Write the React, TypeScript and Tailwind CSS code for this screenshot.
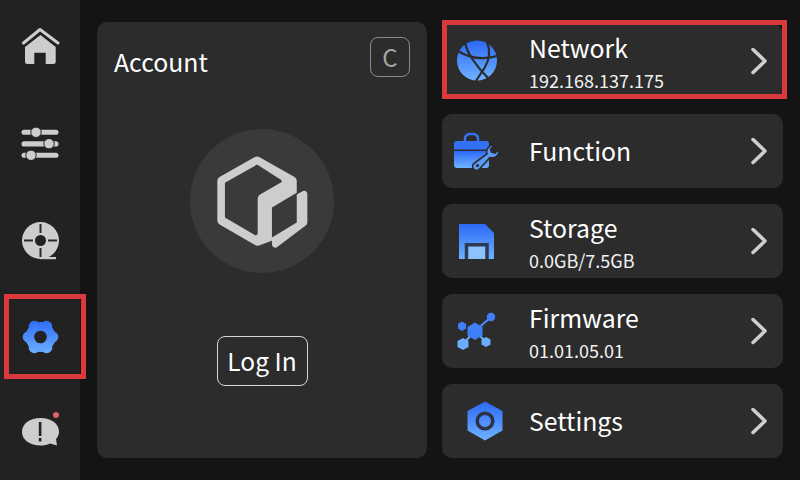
const FONT = "font-['Noto_Sans_CJK_SC','Noto_Sans',sans-serif]";

function Grad({ id }: { id: string }) {
  return (
    <defs>
      <linearGradient id={id} x1="0" y1="0" x2="0" y2="1">
        <stop offset="0" stopColor="#2b69f6" />
        <stop offset="1" stopColor="#6fb2ff" />
      </linearGradient>
    </defs>
  );
}

function Home() {
  return (
    <svg width="40" height="40" viewBox="0 0 40 40">
      <path d="M3.500 18 L20 4.500 L38 18" fill="none" stroke="#cdcdcd" strokeWidth="3" strokeLinecap="round" strokeLinejoin="round" />
      <path d="M20.500 10 L35.700 22 V36.500 a2.500 2.500 0 0 1 -2.500 2.500 H25.700 V27.700 H14.300 V39 H7.500 A2.500 2.500 0 0 1 5 36.500 V22 Z" fill="#cdcdcd" />
    </svg>
  );
}

function Sliders() {
  return (
    <svg width="40" height="40" viewBox="0 0 40 40" fill="#cdcdcd">
      <rect x="1.500" y="9.800" width="37" height="5" rx="2.500" />
      <circle cx="16" cy="12.300" r="5.200" stroke="#222" strokeWidth="1" />
      <rect x="1.500" y="21.200" width="37" height="5.400" rx="2.700" />
      <circle cx="29" cy="23.700" r="5.200" stroke="#222" strokeWidth="1" />
      <rect x="1.500" y="32.800" width="37" height="5" rx="2.500" />
      <circle cx="11" cy="35.300" r="5.200" stroke="#222" strokeWidth="1" />
    </svg>
  );
}

function Reel() {
  return (
    <svg width="40" height="40" viewBox="0 0 40 40">
      <circle cx="20.500" cy="20.500" r="18.500" fill="#cdcdcd" />
      <rect x="20" y="37" width="16" height="2.200" fill="#cdcdcd" />
      <circle cx="20.500" cy="20.500" r="5.500" fill="#222" />
      <rect x="19.500" y="4" width="2" height="9" fill="#2a2a2a" />
      <rect x="19.500" y="28" width="2" height="9" fill="#2a2a2a" />
      <rect x="4" y="19.500" width="9" height="2" fill="#2a2a2a" />
      <rect x="28" y="19.500" width="9" height="2" fill="#2a2a2a" />
    </svg>
  );
}

function Gear() {
  const lobes = [0, 60, 120, 180, 240, 300];
  return (
    <svg width="40" height="40" viewBox="0 0 40 40">
      <defs>
        <linearGradient id="g-gear" gradientUnits="userSpaceOnUse" x1="0" y1="2" x2="0" y2="38">
          <stop offset="0" stopColor="#2b69f6" />
          <stop offset="1" stopColor="#6fb2ff" />
        </linearGradient>
      </defs>
      <g fill="url(#g-gear)">
        <circle cx="20.500" cy="20" r="15" />
        {lobes.map((a) => (
          <circle
            key={a}
            cx={20.5 + 12 * Math.cos((a * Math.PI) / 180)}
            cy={20 + 12 * Math.sin((a * Math.PI) / 180)}
            r="5.800"
          />
        ))}
      </g>
      <circle cx="20.500" cy="20" r="6.300" fill="#222" />
    </svg>
  );
}

function Alert() {
  return (
    <svg width="40" height="40" viewBox="0 0 40 40">
      <path d="M20.500 6 C31 6 39 11.500 39 19.500 c0 3 -1.200 5.500 -3 7.500 L37 33.500 L30 31.500 C27 33 24 33.500 20.500 33.500 C10 33.500 2 28 2 20 C2 11.500 10 6 20.500 6 Z" fill="#cdcdcd" />
      <rect x="18.800" y="10" width="2.600" height="14" fill="#222" />
      <rect x="18.800" y="26" width="2.600" height="3.500" fill="#222" />
    </svg>
  );
}

function Globe() {
  return (
    <svg width="42" height="42" viewBox="0 0 42 42">
      <Grad id="g-globe" />
      <circle cx="21" cy="20.500" r="20" fill="url(#g-globe)" />
      <g fill="none" stroke="#2c2c2c" strokeWidth="2.200">
        <path d="M9 2 C10 9 13 14 17 20 C21 26 26 32 32 38" />
        <path d="M2 11 C10 16 24 21 41 16" />
        <path d="M31 2 C35 12 33 20 29 27 C26 32 23 36 20 41" />
      </g>
    </svg>
  );
}

function Toolbox() {
  return (
    <svg width="48" height="38" viewBox="0 0 48 38">
      <Grad id="g-tool" />
      <path d="M12 9 V6.500 a4.500 4.500 0 0 1 4.500 -4.500 h4 a4.500 4.500 0 0 1 4.500 4.500 V9" fill="none" stroke="#3572f7" strokeWidth="2.500" />
      <path d="M1 12 a3 3 0 0 1 3 -3 H33 a3 3 0 0 1 3 3 V17.500 H1 Z" fill="#3272f7" />
      <path d="M1 19 H36 V33 a3 3 0 0 1 -3 3 H4 a3 3 0 0 1 -3 -3 Z" fill="url(#g-tool)" />
      <path d="M42 13 a7 7 0 0 0 -8 9 L21.500 31 a4 4 0 1 0 5.500 5.500 L37 25.500 a7 7 0 0 0 9 -8 l-4 3.500 l-3.500 -1 l-1 -3 Z" fill="#5a9bfc" stroke="#2c2c2c" strokeWidth="1.600" />
      <circle cx="24.500" cy="33.500" r="1.600" fill="#2c2c2c" />
    </svg>
  );
}

function Floppy() {
  return (
    <svg width="38" height="38" viewBox="0 0 38 38">
      <Grad id="g-disk" />
      <path d="M1 2 H27 L36 11 V37 H1 Z" fill="url(#g-disk)" />
      <path d="M8.500 37 V22.750 H29 V37" fill="#8cc3ff" stroke="#2c3a55" strokeWidth="3.500" />
    </svg>
  );
}

function Molecule() {
  return (
    <svg width="42" height="40" viewBox="0 0 42 40">
      <g stroke="#4d8ffb" strokeWidth="2">
        <path d="M19 20 L35 6" />
        <path d="M19 20 L7 33" stroke="#6aadff" />
        <path d="M19 20 L30 31" stroke="#6aadff" />
      </g>
      <path d="M19 11.500 L26.500 16 V24.500 L19 29 L11.500 24.500 V16 Z" fill="#3f80f9" />
      <circle cx="35" cy="6" r="4.200" fill="#3f7ff9" />
      <path d="M6 10.500 L10 13 V17.500 L6 20 L2 17.500 V13 Z" fill="#3f80f9" />
      <path d="M7 27 L12.500 30 V36 L7 39 L1.500 36 V30 Z" fill="#6aadff" />
      <path d="M30 26 L34.500 28.500 V33.500 L30 36 L25.500 33.500 V28.500 Z" fill="#6aadff" />
    </svg>
  );
}

function HexNut() {
  return (
    <svg width="38" height="40" viewBox="0 0 38 40" className="ml-[16px]">
      <Grad id="g-hex" />
      <path d="M19 0.500 L36.500 10 V29.500 L19 39.500 L1.500 29.500 V10 Z" fill="url(#g-hex)" />
      <circle cx="19" cy="20" r="7.800" fill="none" stroke="#2c3344" strokeWidth="3.500" />
    </svg>
  );
}

function Logo() {
  return (
    <svg width="96" height="96" viewBox="130 125 290 290" fill="#cdcdcd">
      <path
        fillRule="evenodd"
        d="M252 138 a16 16 0 0 1 16 0 L372 197 a14 14 0 0 1 8 12 V245 L305 290 V390 L270 403 a16 16 0 0 1 -16 0 L148 342 a14 14 0 0 1 -8 -12 V209 a14 14 0 0 1 8 -12 Z M260 160 L163 215 V320 L252 372 a6 6 0 0 0 10 -5 V262 a14 14 0 0 1 7 -12 L332 214 a5 5 0 0 0 0 -8 Z"
      />
      <path d="M380 250 L396 241 a10 10 0 0 1 16 8 V335 a12 12 0 0 1 -6 10 L322 408 a10 10 0 0 1 -17 -8 V380 L380 335 Z" />
    </svg>
  );
}

function Chevron() {
  return (
    <svg width="20" height="30" viewBox="0 0 20 30" className="mr-[14px]">
      <path d="M4 3.500 L16 15 L4 26.500" fill="none" stroke="#cfcfcf" strokeWidth="3.500" strokeLinecap="round" strokeLinejoin="round" />
    </svg>
  );
}

function Row({ icon, title, sub }: { icon: React.ReactNode; title: string; sub?: string }) {
  return (
    <div className="flex h-[74px] items-center rounded-[10px] bg-[#2c2c2c]">
      <div className="mr-[17px] flex w-[70px] shrink-0 items-center justify-center">{icon}</div>
      <div className={sub ? "flex flex-1 flex-col justify-center pt-[2px]" : "flex flex-1 flex-col justify-center pb-[2px]"}>
        <div className="text-[24.8px] leading-[36px] text-white">{title}</div>
        {sub && <div className="text-[18px] leading-[30px] text-[#f2f2f2]">{sub}</div>}
      </div>
      <Chevron />
    </div>
  );
}

export default function App() {
  return (
    <div className={`${FONT} relative flex h-[480px] w-[800px] overflow-hidden bg-[#141414]`}>
      <aside className="flex w-[80px] shrink-0 flex-col bg-[#222222]">
        <div className="flex h-[90px] items-center justify-center"><Home /></div>
        <div className="flex h-[100px] items-center justify-center"><Sliders /></div>
        <div className="flex h-[100px] items-center justify-center"><Reel /></div>
        <div className="flex h-[94px] items-center justify-center"><Gear /></div>
        <div className="flex h-[96px] items-center justify-center"><Alert /></div>
      </aside>

      <section className="relative ml-[17px] mt-[22px] flex h-[436px] w-[330px] flex-col items-center rounded-[10px] bg-[#2c2c2c]">
        <div className="flex w-full items-start justify-between pl-[17px] pr-[17px] pt-[16px]">
          <span className="mt-[6px] text-[24.8px] leading-[34px] text-white">Account</span>
          <span className="mt-[-1px] flex h-[40px] w-[40px] items-center justify-center rounded-[8px] border border-[#8a8a8a] text-[24px] text-[#a5a5a5]">C</span>
        </div>
        <div className="mt-[51px] flex h-[144px] w-[144px] items-center justify-center rounded-full bg-[#3a3a3d]">
          <Logo />
        </div>
        <button className="mt-[63px] flex h-[50px] w-[91px] items-center justify-center rounded-[8px] border border-[#d5d5d5] text-[24.500px] text-white">
          Log In
        </button>
      </section>

      <section className="ml-[15px] mt-[24px] flex w-[341px] flex-col gap-[16px]">
        <Row icon={<Globe />} title="Network" sub="192.168.137.175" />
        <Row icon={<Toolbox />} title="Function" />
        <Row icon={<Floppy />} title="Storage" sub="0.0GB/7.5GB" />
        <Row icon={<Molecule />} title="Firmware" sub="01.01.05.01" />
        <Row icon={<HexNut />} title="Settings" />
      </section>

      <div className="absolute left-[442px] top-[20px] h-[79px] w-[345px] border-[5px] border-[#da3a3e]" />
      <div className="absolute left-[4px] top-[294px] h-[85px] w-[82px] border-[5px] border-[#da3a3e]" />
      <div className="absolute left-[53px] top-[412px] h-[6px] w-[6px] rounded-full bg-[#e0606c]" />
    </div>
  );
}
